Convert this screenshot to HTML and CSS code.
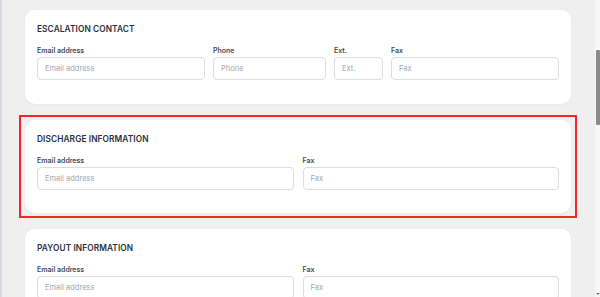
FILE: index.html
```html
<!DOCTYPE html>
<html lang="en">

<head>
  <meta charset="UTF-8">
  <meta name="viewport" content="width=device-width, initial-scale=1.0">
  <title>Contacts</title>
  <link rel="stylesheet" href="styles.css">
</head>

<body>
  <div class="sidebar-edge"></div>

  <main class="content">
    <section class="card">
      <h2>ESCALATION CONTACT</h2>
      <div class="row row-four">
        <label class="field">
          <span>Email address</span>
          <input type="text" placeholder="Email address">
        </label>
        <label class="field">
          <span>Phone</span>
          <input type="text" placeholder="Phone">
        </label>
        <label class="field">
          <span>Ext.</span>
          <input type="text" placeholder="Ext.">
        </label>
        <label class="field">
          <span>Fax</span>
          <input type="text" placeholder="Fax">
        </label>
      </div>
    </section>

    <section class="card selected">
      <h2>DISCHARGE INFORMATION</h2>
      <div class="row row-two">
        <label class="field">
          <span>Email address</span>
          <input type="text" placeholder="Email address">
        </label>
        <label class="field">
          <span>Fax</span>
          <input type="text" placeholder="Fax">
        </label>
      </div>
    </section>

    <section class="card">
      <h2>PAYOUT INFORMATION</h2>
      <div class="row row-two">
        <label class="field">
          <span>Email address</span>
          <input type="text" placeholder="Email address">
        </label>
        <label class="field">
          <span>Fax</span>
          <input type="text" placeholder="Fax">
        </label>
      </div>
    </section>
  </main>

  <div class="scrollbar">
    <div class="thumb"></div>
    <div class="arrow"></div>
  </div>
</body>

</html>
```

FILE: styles.css
```css
html,
body {
  height: 100%;
}

body {
  margin: 0;
  display: flex;
  overflow: hidden;
  font-family: Inter, "Noto Sans", sans-serif;
  background-color: #efefef;
  color: #333;
}

.sidebar-edge {
  width: 2px;
  background-color: #dad6e4;
}

.content {
  flex: 1;
  padding: 10px 24px 0 23px;
  display: flex;
  flex-direction: column;
  gap: 16px;
  overflow: hidden;
}

.card {
  position: relative;
  background-color: #fff;
  border-radius: 10px;
  padding: 14px 12px 23px 12px;
  height: 93.5px;
  box-sizing: border-box;
  flex-shrink: 0;
  box-shadow: 0 1px 3px rgba(0, 0, 0, 0.04);
}

/* red highlight frame drawn over the selected card */
.card.selected::before {
  content: "";
  position: absolute;
  top: -5px;
  left: -6px;
  right: -6px;
  bottom: -5px;
  border: 2px solid #f0262b;
  pointer-events: none;
}

h2 {
  margin: 0 0 11px 0;
  font-size: 8.3px;
  line-height: 11px;
  font-weight: 600;
  color: #2a313c;
  letter-spacing: 0.1px;
}

.row {
  display: grid;
}

.row-four {
  grid-template-columns: 1fr 113px 49px 1fr;
  gap: 8px;
}

.row-two {
  grid-template-columns: 1fr 1fr;
  gap: 9px;
}

.field {
  display: flex;
  flex-direction: column;
  gap: 2px;
}

.field span {
  font-size: 7px;
  line-height: 9px;
  font-weight: 600;
  color: #434c5a;
}

.field input {
  height: 23px;
  box-sizing: border-box;
  border: 1px solid #dcdde0;
  border-radius: 4px;
  padding: 0 7px;
  font-family: Inter, "Noto Sans", sans-serif;
  font-size: 7.5px;
  color: #333;
  background-color: #fff;
  width: 100%;
  min-width: 0;
}

.field input::placeholder {
  color: #9ea6b0;
}

.scrollbar {
  width: 5px;
  background-color: #f7f7f7;
  position: relative;
}

.thumb {
  margin: 50px 0 0 1px;
  height: 75px;
  background-color: #8a8a8a;
  border-radius: 1px;
}

.arrow {
  position: absolute;
  bottom: 2px;
  left: 1px;
  width: 0;
  height: 0;
  border-left: 2px solid transparent;
  border-right: 2px solid transparent;
  border-top: 2px solid #777;
}
```
